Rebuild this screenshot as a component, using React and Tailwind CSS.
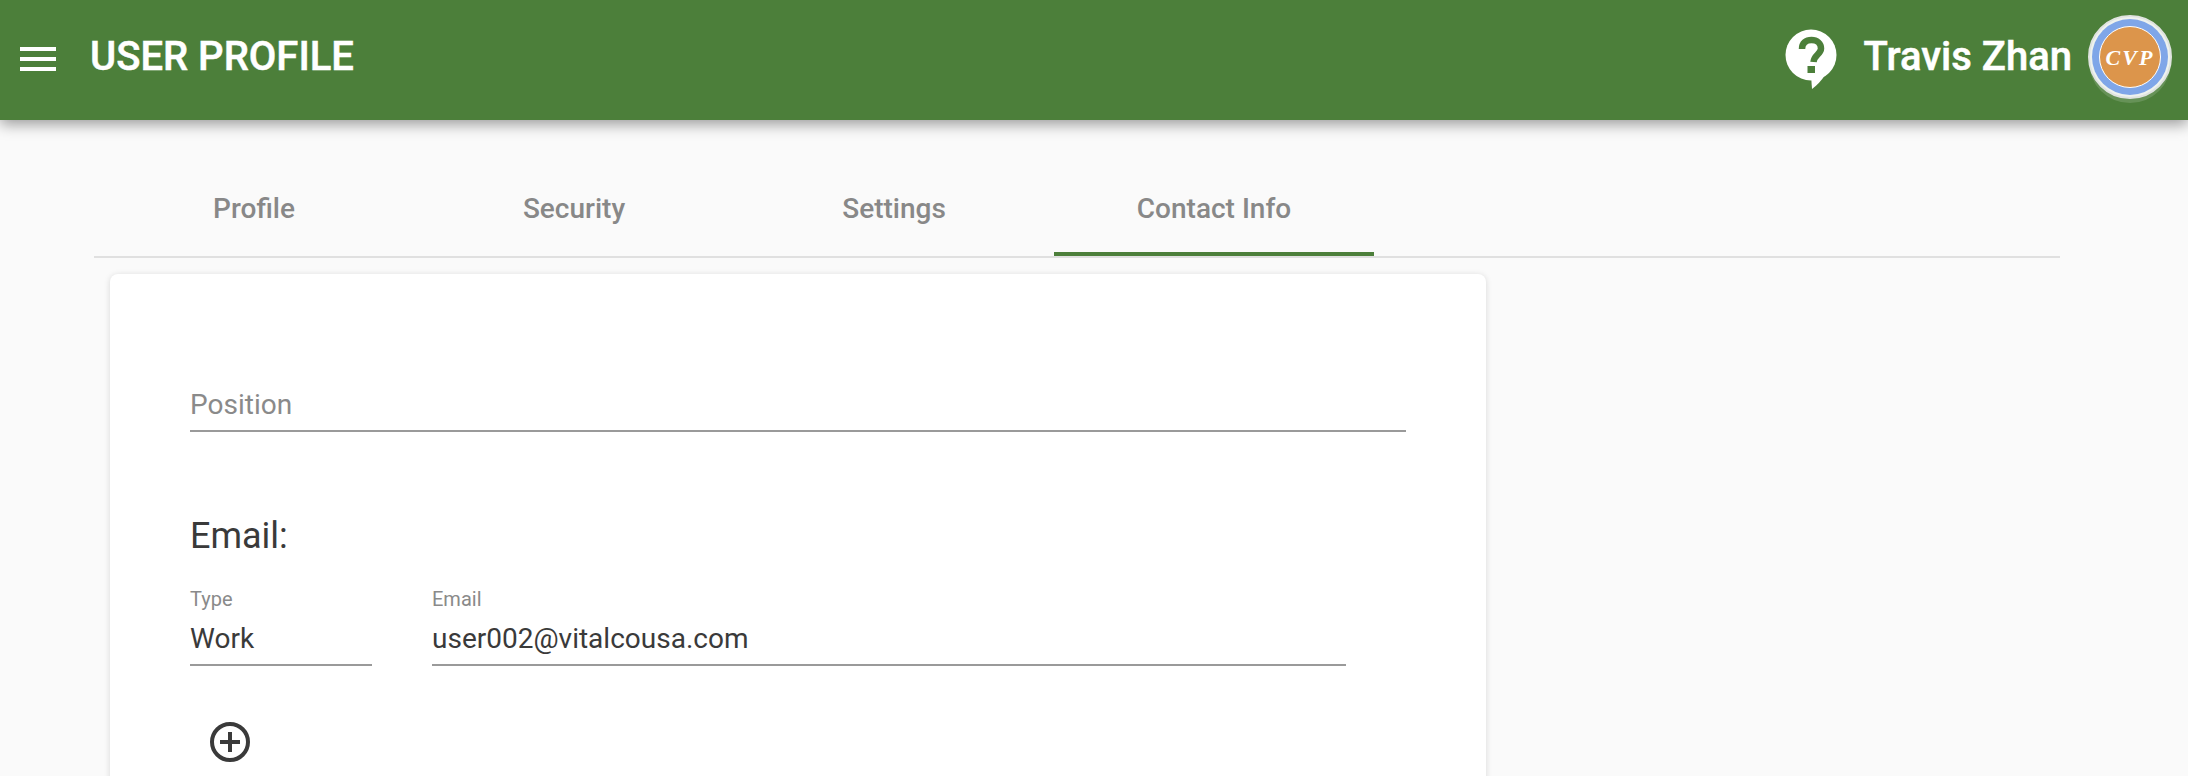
function HelpIcon() {
  return (
    <svg width="52" height="60" viewBox="0 0 52 60" className="mt-[4px] shrink-0">
      <circle cx="26" cy="26" r="25.5" fill="#fff" />
      <path d="M26 46 L40 46 Q35 54 27 60 Z" fill="#fff" />
      <path
        d="M17 20 C17 14 21 11 26.5 11 C32 11 36 14.5 36 19.5 C36 25 29 26 28.5 33"
        fill="none"
        stroke="#4c7f3a"
        strokeWidth="6.5"
      />
      <rect x="22.5" y="37" width="7.5" height="7" fill="#4c7f3a" />
    </svg>
  );
}

function Avatar() {
  return (
    <div className="relative size-[84px] shrink-0">
      <div className="absolute left-[1px] top-[6px] size-[82px] rounded-full bg-white/15"></div>
      <div className="relative flex size-[84px] items-center justify-center rounded-full border-[2px] border-[#dfe3df] bg-[#eef2ee]">
        <div className="flex size-[76px] items-center justify-center rounded-full bg-[#7fa6e8]">
          <div className="flex size-[62px] items-center justify-center rounded-full border-[1.5px] border-white bg-[#dc954b] font-['Liberation_Serif',serif] text-[22px] font-bold italic tracking-[2px] text-white">
            CVP
          </div>
        </div>
      </div>
    </div>
  );
}

function Tab({ label, active }) {
  return (
    <div
      className={
        "flex h-[136px] w-[320px] items-start justify-center pt-[69px] text-[28px] leading-[40px] font-medium text-[#888888] " +
        (active ? "border-b-[4px] border-[#4c7f3a]" : "")
      }
    >
      {label}
    </div>
  );
}

function Field({ label, value, className }) {
  return (
    <div className={"border-b-2 border-[#9a9a9a] " + className}>
      <div className="text-[20px] leading-[24px] text-[#8a8a8a]">{label}</div>
      <div className="mt-[9px] pb-[7px] text-[28px] leading-[37px] text-[#3a3a3a]">{value}</div>
    </div>
  );
}

export default function App() {
  return (
    <div className="flex h-[776px] flex-col overflow-hidden bg-[#fafafa] font-['Roboto',sans-serif]">
      <header className="z-10 flex h-[120px] shrink-0 items-center bg-[#4c7f3a] pr-[16px] pb-[6px] pl-[20px] shadow-[0_4px_14px_rgba(0,0,0,0.4)]">
        <div className="mt-[4px] flex w-[36px] flex-col gap-[6px]">
          <span className="h-[4px] bg-white"></span>
          <span className="h-[4px] bg-white"></span>
          <span className="h-[4px] bg-white"></span>
        </div>
        <h1 className="ml-[34px] text-[40px] leading-[48px] font-medium text-white [-webkit-text-stroke:0.5px_white]">
          USER PROFILE
        </h1>
        <div className="ml-auto flex items-center">
          <HelpIcon />
          <span className="mr-[16px] ml-[27px] text-[40px] leading-[48px] font-medium text-white [-webkit-text-stroke:0.5px_white]">
            Travis Zhan
          </span>
          <Avatar />
        </div>
      </header>

      <main className="px-[94px]">
        <nav className="mr-[34px] flex border-b-2 border-[#e0e0e0]">
          <Tab label="Profile" />
          <Tab label="Security" />
          <Tab label="Settings" />
          <Tab label="Contact Info" active />
        </nav>

        <section className="mt-[16px] ml-[16px] h-[600px] w-[1376px] rounded-[8px] bg-white px-[80px] pt-[112px] shadow-[0_1px_6px_rgba(0,0,0,0.14)]">
          <div className="w-[1216px] border-b-2 border-[#9a9a9a] pb-[6px] text-[28px] leading-[38px] text-[#8a8a8a]">
            Position
          </div>
          <h2 className="mt-[82px] text-[36px] leading-[44px] text-[#3a3a3a]">Email:</h2>
          <div className="mt-[29px] flex gap-[60px]">
            <Field label="Type" value="Work" className="w-[182px]" />
            <Field label="Email" value="user002@vitalcousa.com" className="w-[914px]" />
          </div>
          <div className="mt-[56px] ml-[20px] flex size-[40px] items-center justify-center rounded-full border-[4px] border-[#3a3a3a]">
            <svg width="24" height="24" viewBox="0 0 24 24">
              <path d="M12 2V22M2 12H22" stroke="#3a3a3a" strokeWidth="4" fill="none" />
            </svg>
          </div>
        </section>
      </main>
    </div>
  );
}
